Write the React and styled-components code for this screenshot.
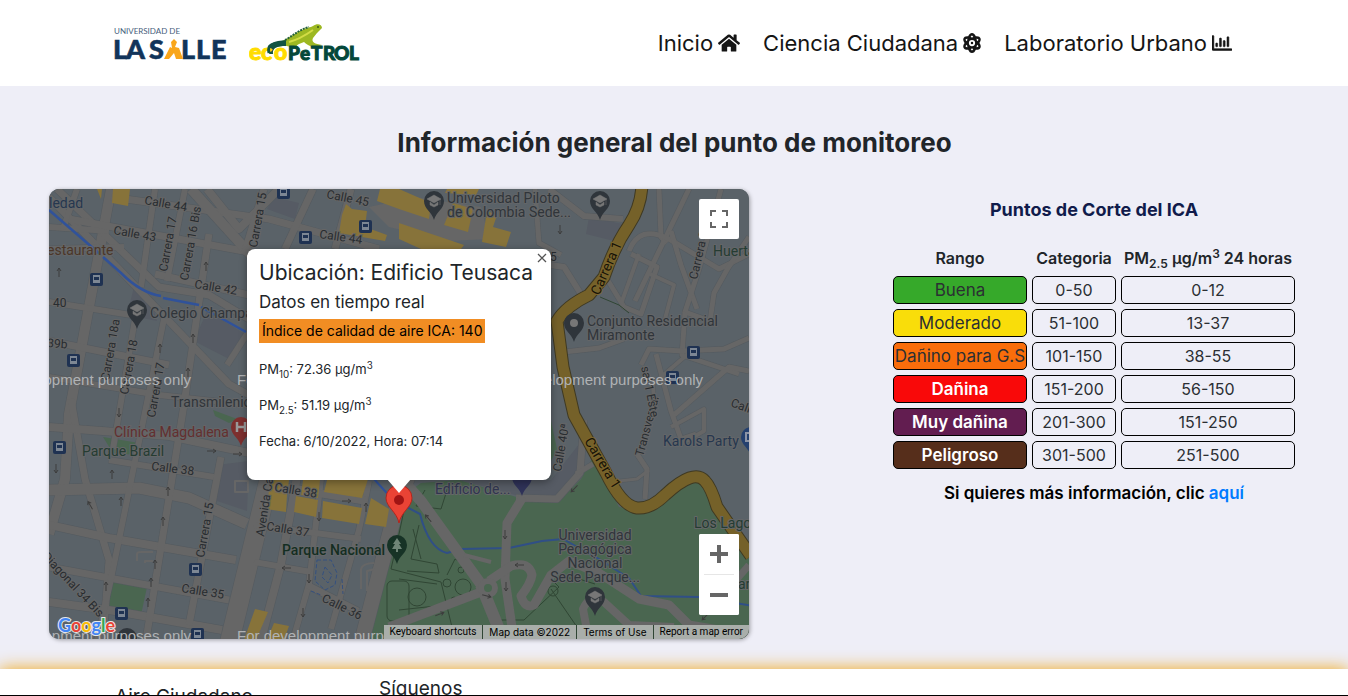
import React from "react";
import styled, { createGlobalStyle, css } from "styled-components";
import { FaHome, FaAtom, FaRegChartBar } from "react-icons/fa";

const Global = createGlobalStyle`
  * { box-sizing: border-box; }
  html, body { margin: 0; padding: 0; }
  body {
    font-family: Inter, "Open Sans", sans-serif;
    font-size: 16px;
    line-height: 24px;
    color: #212529;
    background: #eeeef7;
  }
  h1, h2, h3, p { margin: 0; }
  sub, sup { font-size: 75%; line-height: 0; }
`;

const Page = styled.div`
  height: 100vh;
  overflow-y: auto;
  scrollbar-width: none;
  border-bottom: 1px solid #000;
`;

const Header = styled.header`
  display: flex;
  align-items: center;
  justify-content: space-between;
  height: 86px;
  padding: 0 116px 0 114px;
  background: #fff;
`;

const Logos = styled.div`
  display: flex;
  align-items: center;
  gap: 22px;
  svg { display: block; }
`;

const Nav = styled.nav`
  display: flex;
  gap: 23px;
`;

const NavLink = styled.a`
  display: flex;
  align-items: center;
  gap: 5px;
  font-size: 22px;
  color: #151515;
  text-decoration: none;
  white-space: nowrap;
  svg { width: ${(p) => p.$icon}px; height: 20px; flex: none; }
`;

const Main = styled.main`
  padding: 41px 48px 30px 49px;
`;

const PageTitle = styled.h1`
  font-size: 26px;
  line-height: 32px;
  font-weight: 700;
  text-align: center;
  margin-bottom: 30px;
`;

const Columns = styled.div`
  display: flex;
  justify-content: space-between;
  align-items: flex-start;
  gap: 24px;
`;

const MapCard = styled.section`
  position: relative;
  flex: 0 1 700px;
  min-width: 0;
  height: 450px;
  border-radius: 10px;
  overflow: hidden;
  background: #5b6369;
  box-shadow: 1px 1px 4px rgba(0, 0, 0, 0.35);
`;

const MapArt = styled.svg`
  display: block;
  width: 100%;
  height: 100%;
  font-family: Roboto, sans-serif;
`;

const InfoWindow = styled.div`
  position: absolute;
  left: 198px;
  top: 60px;
  width: 304px;
  height: 231px;
  padding: 12px;
  border-radius: 8px;
  background: #fff;
  box-shadow: 0 2px 7px 1px rgba(0, 0, 0, 0.3);
  &::after {
    content: "";
    position: absolute;
    left: 140px;
    top: 230px;
    border: 12px solid transparent;
    border-top: 14px solid #fff;
    border-bottom: 0;
  }
`;

const CloseButton = styled.button`
  position: absolute;
  right: 3px;
  top: 3px;
  display: flex;
  padding: 0;
  border: 0;
  background: none;
  color: #555;
`;

const Place = styled.h2`
  font-size: 21px;
  line-height: 24px;
  font-weight: 400;
  white-space: nowrap;
`;

const Live = styled.h3`
  margin-top: 8px;
  font-size: 17px;
  line-height: 19px;
  font-weight: 400;
`;

const Badge = styled.p`
  display: inline-block;
  margin-top: 7px;
  padding: 0 3px;
  font-size: 14px;
  line-height: 24px;
  color: #000;
  background: #f18d23;
  white-space: nowrap;
`;

const Reading = styled.p`
  margin-top: 16px;
  font-size: 13px;
  line-height: 20px;
`;

const squareButton = css`
  display: flex;
  align-items: center;
  justify-content: center;
  width: 40px;
  height: 40px;
  padding: 0;
  border: 0;
  background: #fff;
  color: #666;
`;

const FullscreenButton = styled.button`
  ${squareButton}
  position: absolute;
  right: 10px;
  top: 10px;
  border-radius: 2px;
`;

const ZoomBox = styled.div`
  position: absolute;
  right: 10px;
  bottom: 24px;
  width: 40px;
  border-radius: 2px;
  background: #fff;
  overflow: hidden;
  hr { margin: 0 5px; border: 0; border-top: 1px solid #e6e6e6; }
`;

const ZoomButton = styled.button`${squareButton}`;

const Legal = styled.div`
  position: absolute;
  right: 0;
  bottom: 0;
  display: flex;
  gap: 1px;
  background: #2f4534;
`;

const legalPart = css`
  padding: 0 6px;
  border: 0;
  font: 10px/14px Inter, sans-serif;
  color: #000;
  background: #a9aeaa;
  text-decoration: none;
  white-space: nowrap;
`;
const LegalButton = styled.button`${legalPart} font-family: Roboto, sans-serif;`;
const LegalText = styled.span`${legalPart}`;
const LegalLink = styled.a`${legalPart} font-family: ${(p) => (p.$narrow ? "Roboto" : "Inter")}, sans-serif;`;

const Cuts = styled.section`
  flex: none;
  text-align: center;
`;

const CutsTitle = styled.h2`
  margin: 9px 0 18px;
  font-size: 18px;
  line-height: 24px;
  font-weight: 700;
  color: #101b4b;
`;

const CutsTable = styled.table`
  width: 412px;
  table-layout: fixed;
  border-collapse: separate;
  border-spacing: 5px;
  white-space: nowrap;
`;

const Col = styled.col`width: ${(p) => p.$w}px;`;

const HeadCell = styled.th`
  padding: 0;
  height: 26px;
  line-height: 24px;
  font-size: 16px;
  font-weight: 600;
`;

const Cell = styled.td`
  height: 28px;
  padding: 0;
  border: 1px solid #000;
  border-radius: 5px;
  font-size: ${(p) => (p.$bg ? 17 : 16)}px;
  line-height: 24px;
  background: ${(p) => p.$bg || "transparent"};
  color: ${(p) => (p.$light ? "#fff" : "#2b2f33")};
  font-weight: ${(p) => (p.$light ? 600 : 400)};
`;

const More = styled.p`
  margin-top: 7px;
  font-size: 17px;
  font-weight: 600;
  color: #000;
  a { color: #007bff; text-decoration: none; }
`;

const Footer = styled.footer`
  display: flex;
  align-items: flex-start;
  gap: 126px;
  padding: 7px 115px 0;
  height: 180px;
  background: #fff;
  box-shadow: 0 0 16px 0 #f0a81a;
`;

const FooterHeading = styled.h3`
  font-size: 19px;
  line-height: 26px;
  font-weight: 400;
  padding-top: ${(p) => p.$drop || 0}px;
`;

function LaSalleLogo() {
  return (
    <svg width="113" height="36" viewBox="0 0 113 36" role="img" aria-label="Universidad de La Salle">
      <text x="0" y="9" fontFamily="Lato, sans-serif" fontSize="8" fill="#46607c">UNIVERSIDAD DE</text>
      <g fontFamily="Lato, sans-serif" fontWeight="900" fontSize="27" fill="#12345a" stroke="#12345a" strokeWidth="0.6">
        <text y="34" x="-1 12 35 67 82 97">LASLLE</text>
      </g>
      <path d="M50 34 L56 22 L58 23 L57 17 L60 14 L63 17 L61 22 L65 23 L69 34 H62 L60 28 L55 34 Z" fill="#f9a61a" />
    </svg>
  );
}

function EcopetrolLogo() {
  return (
    <svg width="112" height="40" viewBox="0 0 112 40" role="img" aria-label="Ecopetrol">
      <path d="M21 31 C17 29 18 20 29 19 C36 18 43 12 49 9 C55 5 60 5 64 3 C68 0 73 1 73 5 L68 10 L64 15 C62 19 66 21 73 22 L66 25 C60 23 57 21 55 19 L50 21 C46 23 48 24 51 26 L44 26 C42 23 39 23 34 23 C26 23 23 26 24 31 Z" fill="#9db822" />
      <path d="M21 31 C17 29 18 20 29 18 L37 17 L37 23 C28 23 23 25 24 31 Z" fill="#135442" />
      <g fontFamily="Lato, sans-serif" fontWeight="900">
        <text x="0 12 25" y="37" fontSize="23" fill="#ffdc00" stroke="#ffdc00">eco</text>
        <text x="39 51 62 74 85 100" y="37" fontSize="19" fill="#04483a" stroke="#04483a">PeTROL</text>
      </g>
      <path d="M20 30 C18 22 22 20 37 20" stroke="#135442" strokeWidth="3" fill="none" />
      <path d="M36 17 C44 13 49 7 60 4" stroke="#24603a" strokeWidth="2" strokeDasharray="2 1" fill="none" />
      <path d="M40 19 C48 17 54 14 64 7" stroke="#d3dc45" strokeWidth="2" fill="none" />
      <circle cx="69" cy="4" r="1" fill="#385b1a" />
    </svg>
  );
}

const streets = [
  [10, "M62 0 L20 225 L16 290 L0 345"], [7, "M22 210 L36 290 L60 371 L54 451"],
  [7, "M0 8 L70 80 L180 195 L200 206"], [7, "M8 0 L110 98 L160 106 L200 130"],
  [6, "M0 60 L75 58"], [6, "M0 38 L60 42"], [6, "M28 0 L14 40"],
  [7, "M62 8 L220 30 L330 60"], [7, "M20 30 L200 63"], [7, "M106 85 L200 106"],
  [6, "M0 113 L82 126"], [7, "M0 152 L120 176"], [6, "M0 188 L110 206 L200 216"],
  [8, "M0 238 L120 247 L210 266"], [6, "M60 271 L165 288"], [11, "M0 301 L90 299 L140 309 L198 335"],
  [8, "M0 336 L60 349 L187 371"], [7, "M0 378 L180 411"], [8, "M0 413 L66 422 L173 441"],
  [6, "M106 0 L92 98"], [6, "M136 0 L118 92"], [7, "M160 45 L134 222 L97 451"],
  [6, "M116 125 L62 390 L48 451"], [6, "M86 130 L64 260"], [7, "M172 268 L140 436"],
  [10, "M142 0 L220 86"], [8, "M158 0 L190 40 L232 -2"], [7, "M215 0 L195 65"],
  [7, "M264 0 L236 60"], [7, "M302 0 L286 60"], [6, "M200 142 L178 176"],
  [19, "M222 282 L180 455"], [8, "M248 288 L232 375 L212 451"], [6, "M272 290 L260 395 L244 451"],
  [6, "M320 292 L310 341 L282 440"], [15, "M360 285 L347 320 L312 455"],
  [8, "M210 294 L318 312"], [6, "M205 336 L312 350"], [6, "M205 373 L262 383"], [7, "M258 396 L309 422"],
  [5, "M486 0 L490 54 L512 66"],
  [6, "M500 0 L535 27 L574 30"], [6, "M460 70 L515 78 L535 110 L485 145"],
  [5, "M610 0 L612 48 L618 54"], [5, "M640 0 L586 112"],
  [5, "M580 62 Q590 35 620 50 L670 80 L700 65"], [5, "M558 90 L575 118 L592 125 L608 78 L582 65"],
  [4, "M590 65 L572 115"], [4, "M601 85 L625 96 L616 130"], [5, "M622 42 L632 76 L648 120"],
  [5, "M672 0 L650 80 L636 123 L661 132 L665 104 L679 79 L700 48"],
  [5, "M636 123 L633 166 L690 185"], [5, "M700 149 L675 160 L633 162 L600 160 L592 176"],
  [5, "M700 182 L680 178 L625 226"], [4, "M640 164 L604 195 L605 215"],
  [5, "M607 165 L622 222 L632 250 L647 245"], [4, "M622 238 L655 220 L655 242 L632 255"],
  [5, "M588 265 L598 280 L596 310"], [3, "M570 292 L588 290 L600 281"],
  [5, "M515 163 L550 159 L575 150"], [7, "M535 231 L531 284 L508 310 L467 309"],
  [5, "M527 285 L544 275"],
];
const parkRoads = [
  [11, "M348 285 L372 312 L434 398"], [9, "M474 308 L458 334 L456 390 L465 452"],
  [12, "M432 396 L456 455"], [9, "M440 400 L340 438"],
  [9, "M440 392 L462 377 Q480 372 483 386 Q482 394 472 407 Q476 420 485 416 L502 386 L520 372 L550 384 L590 410 L620 416 L640 436 L700 446"],
  [8, "M540 452 L534 420 Q540 405 555 413 L580 436 L625 438"], [4, "M415 366 L442 373"],
  [7, "M688 390 L700 376"],
];
const footpaths = "M376 301 L367 317 L392 320 L399 298 M357 312 L350 345 L342 380 L392 393 L403 438 M370 336 L362 370 L388 375 L390 384 L358 382 M398 386 L406 370 L426 380 M364 340 L372 370 M350 390 L388 395 M405 415 L350 421 M440 411 L450 431 L475 431 L510 398 L500 388 M510 388 L530 390 L546 395 M502 400 L528 438";
const yellowBlocks = [
  "M64 0 H81 L79 17 L63 14 Z", "M48 0 L52 10 L53 0 Z",
  "M331 0 H350 L382 14 L380 30 L350 20 L328 12 Z",
  "M297 15 L303 20 L318 22 L316 38 L338 46 L336 52 L290 44 L293 26 Z",
  "M350 34 L415 56 L412 60 H372 L350 50 Z",
  "M404 14 L424 20 L419 43 L395 36 Z", "M438 22 L448 26 L444 38 L462 43 L457 58 L433 53 Z",
  "M398 0 H430 L427 6 L396 4 Z",
  "M222 291 L240 291 L238 306 L220 302 Z", "M254 291 L271 291 L269 309 L252 306 Z", "M278 291 L319 290 L313 309 L275 303 Z",
  "M220 302 L238 306 L237 323 L217 320 Z", "M247 307 L269 311 L267 328 L245 323 Z", "M274 312 L313 319 L310 335 L273 329 Z",
  "M322 309 L340 320 L337 338 L316 335 Z", "M206 420 L219 423 L207 451 L195 451 Z", "M225 434 L240 437 L235 451 L218 451 Z",
];
const carrera = "M593 -4 Q592 18 580 36 Q565 58 555 88 L540 106 Q517 117 508 132 L514 178 L525 226 L557 284 Q573 317 588 319 Q602 320 616 306 Q645 279 656 292 Q662 298 668 318 L702 367";
const stream = "M350 314 L371 325 Q380 360 398 364 L412 360 L460 359 L493 352 L514 350 L550 370 L575 386 L580 389 L592 407 L650 408 L704 417";

const street = "#282c30";
const labels = [
  [0, 19, "ledad", 14, "#26374f"], [-2, 66, "estaurante", 14, "#4b3628"], [101, 129, "Colegio Champa", 14, "#30353a"],
  [122, 218, "Transmilenio", 14, "#30353a"], [65, 248, "Clínica Magdalena", 14, "#632f2f"], [33, 267, "Parque Brazil", 14, "#253c32"],
  [398, 14, "Universidad Piloto", 14, "#30353a"], [398, 28, "de Colombia Sede...", 14, "#30353a"],
  [538, 137, "Conjunto Residencial", 14, "#30353a"], [538, 151, "Miramonte", 14, "#30353a"], [664, 67, "Huerta", 14, "#253c32"],
  [614, 257, "Karols Party", 14, "#26374f"], [645, 339, "Los Lagos", 14, "#253c32"], [386, 305, "Edificio de...", 14, "#30354f"],
  [233, 366, "Parque Nacional", 14, "#142e22", 500], [689, 400, "arte", 14, "#253c32"],
];
const streetLabels = [
  [95, 15, 10, "Calle 44"], [64, 45, 10, "Calle 43"], [145, 99, 9, "Calle 42"], [277, 9, 11, "Calle 45"], [270, 49, 8, "Calle 44"],
  [4, 118, 0, "40"], [-2, 158, 4, "39b"], [102, 281, 7, "Calle 38"], [225, 302, 9, "Calle 38"], [217, 341, 9, "Calle 37"],
  [132, 403, 9, "Calle 35"], [272, 412, 26, "Calle 36"], [118, 83, -80, "Carrera 17"], [139, 92, -80, "Carrera 16 Bis"],
  [208, 59, -80, "Carrera 15"], [60, 192, -80, "Carrera 18a"], [79, 206, -80, "Carrera 18"], [106, 229, -80, "Carrera 17"],
  [155, 369, -80, "Carrera 15"], [215, 348, -81, "Avenida Caracas"], [-7, 368, 47, "Diagonal 34 Bis"],
  [550, 107, -66, "Carrera 1", "#171307"], [535, 252, 59, "Carrera 1", "#171307"], [648, 91, -77, "Carrera 9"],
  [512, 283, -80, "Calle 40ª"], [594, 268, -75, "Transversal"], [592, 178, 79, "sal 1 Este"], [681, 217, 20, "Calle 39"],
  [501, 72, 0, "5"],
];
const stations = [[234, 3], [256, 48], [316, 37], [47, 90], [24, 171], [10, 258], [146, 380], [72, 424], [148, 445], [644, 163], [623, 188]];
const arrows = [[10, 83, 0], [157, 77, 0], [144, 149, 0], [111, 159, 0], [139, 183, 0], [70, 224, 180], [7, 280, 180], [63, 285, 0], [119, 302, 0], [72, 312, 0], [114, 332, 0], [41, 316, -30], [106, 375, 0], [102, 393, 0], [57, 397, 0], [99, 413, 0], [163, 262, 90], [189, 265, 90], [298, 312, 90], [317, 318, 0], [270, 328, 180], [237, 379, -90], [260, 390, 180], [254, 424, 180], [511, 41, 180], [379, 329, -40], [456, 346, 180], [457, 398, 180], [470, 376, -90], [438, 407, 105], [391, 425, 70], [525, 300, 225], [656, 428, 225]];

function Pin({ x, y, color, kind }) {
  return (
    <g transform={`translate(${x} ${y})`}>
      <path d="M0 19 C-2 11 -10 8 -10 0 A10 10 0 0 1 10 0 C10 8 2 11 0 19 Z" fill={color} />
      {kind === "school" && <path d="M-7 -2 L0 -6 L7 -2 L0 2 Z M-4 1 L0 4 L4 1 V4 L0 6 L-4 4 Z M6 -2 V4" fill="#777" stroke="#777" strokeWidth=".5" />}
      {kind === "dot" && <circle r="4" fill="#777" />}
      {kind === "tree" && <path d="M0 -7 L4 -1 H2 L5 4 H1 V7 H-1 V4 H-5 L-2 -1 H-4 Z" fill="#6f8577" />}
      {kind === "hospital" && <path d="M-4 -5 V5 M4 -5 V5 M-4 0 H4" stroke="#999" strokeWidth="2.5" />}
      {kind === "shop" && <rect x="-5" y="-4" width="8" height="8" fill="none" stroke="#8b93a5" strokeWidth="2" />}
    </g>
  );
}

function MonitoringMap() {
  return (
    <MapArt viewBox="0 0 700 450" preserveAspectRatio="xMidYMid slice" role="img" aria-label="Mapa del punto de monitoreo">
      <rect width="700" height="450" fill="#5a6268" />
      <g fill="#565b64">
        <path d="M86 94 L100 106 L108 132 L78 126 Z M158 122 L196 145 L180 170 L145 152 Z M540 28 L574 35 L565 52 L537 45 Z M168 276 L200 272 L198 322 L168 312 Z M410 291 H502 L534 250 V285 L508 312 L474 308 Z M225 8 L250 14 L246 30 L218 20 Z" />
      </g>
      <g fill="#4a6650">
        <path d="M342 332 L350 310 L372 294 L410 291 L474 310 L508 314 L532 290 L544 268 L570 318 L600 322 L645 286 L660 290 L700 366 V450 H316 Z" />
        <path d="M62 392 L98 398 L92 426 L58 420 Z M54 248 L90 254 L88 266 L64 264 Z M164 221 L188 230 L180 234 L166 227 Z M502 232 L508 260 L502 272 Z" />
      </g>
      <g fill="none" strokeLinejoin="round">
        {streets.map(([w, d]) => <path key={d} d={d} stroke="#545a5f" strokeWidth={w + 1} />)}
        {streets.map(([w, d]) => <path key={d} d={d} stroke="#666" strokeWidth={w} />)}
        <path d="M366 8 L432 18 L440 50 L398 52 L340 38 L320 18 Z" fill="#666" stroke="none" />
        {yellowBlocks.map((d) => <path key={d} d={d} fill="#87733a" />)}
        <path d={stream} stroke="#304f86" strokeWidth="2" />
        <path d={footpaths} stroke="#304634" />
        <g stroke="#304634">
          <circle cx="368" cy="408" r="9" /><circle cx="414" cy="398" r="8" /><circle cx="398" cy="394" r="4" />
          <circle cx="405" cy="411" r="3" /><circle cx="504" cy="402" r="5" /><circle cx="412" cy="381" r="3" />
          <rect x="338" y="392" width="22" height="40" rx="5" />
        </g>
        {parkRoads.map(([w, d]) => <path key={d} d={d} stroke="#666" strokeWidth={w} />)}
        <circle cx="439" cy="399" r="7" fill="#4a6650" stroke="#666" strokeWidth="6" />
        <path d={carrera} stroke="#3f3922" strokeWidth="13" />
        <path d={carrera} stroke="#756129" strokeWidth="11" />
        <path d="M551 108 L570 116 L580 124" stroke="#304634" />
        <path d="M0 21 L52 66 M54 68 L72 84 Q92 104 112 107 M114 109 L150 116 M152 118 L197 143" stroke="#30529a" strokeWidth="2.5" />
        <path d="M325 290 L345 312" stroke="#30529a" strokeWidth="2" />
        <path d="M268 371 H282 L288 384 L286 396 L276 401 L266 392 Z M276 378 L283 386 L279 394 L273 388 Z M262 402 L272 406 M293 390 L294 405" stroke="#34507f" strokeDasharray="4 2" />
        <path d="M88 372 V365 Q88 363 92 363 H104 M96 374 V372 H104 M186 292 H199 V303 H186 Z M312 400 V380 Q314 374 325 374 M318 402 V382 L326 380" stroke="#666" strokeWidth="2" />
      </g>
      {arrows.map(([x, y, r]) => (
        <path key={`${x}-${y}`} transform={`translate(${x} ${y}) rotate(${r})`} d="M0 5 V-4 M-2 -1 L0 -4 L2 -1" stroke="#3d3d3d" fill="none" />
      ))}
      {stations.map(([x, y]) => (
        <g key={`${x}-${y}`} transform={`translate(${x} ${y})`}>
          <rect x="-6" y="-6" width="13" height="13" rx="2" fill="#1f3252" />
          <path d="M-3 -4 H4 V4 H-3 Z" fill="#7d8794" />
          <path d="M-2 -2 H3 V1 H-2 Z" fill="#1f3252" />
        </g>
      ))}
      <Pin x={88} y={121} color="#2f353b" kind="school" />
      <Pin x={385} y={12} color="#2f353b" kind="school" />
      <Pin x={551} y={12} color="#2f353b" kind="school" />
      <Pin x={546} y={408} color="#2f353b" kind="school" />
      <Pin x={525} y={134} color="#2f353b" kind="dot" />
      <Pin x={473} y={288} color="#2f3258" />
      <Pin x={192} y={238} color="#7d2f2e" kind="hospital" />
      <Pin x={348} y={356} color="#173326" kind="tree" />
      <Pin x={702} y={248} color="#24406f" kind="shop" />
      <circle cx="78" cy="449" r="10" fill="#2f353b" />
      <g stroke="#646668" strokeWidth="2" paintOrder="stroke" strokeLinejoin="round">
        {labels.map(([x, y, t, s, c, w]) => (
          <text key={t} x={x} y={y} fontSize={s} fill={c} fontWeight={w || 400}>{t}</text>
        ))}
        <g fontSize="14" fill="#30353a" textAnchor="middle">
          <text x="546" y="351">Universidad</text>
          <text x="546" y="365">Pedagógica</text>
          <text x="546" y="379">Nacional</text>
          <text x="546" y="393">Sede Parque...</text>
        </g>
      </g>
      {streetLabels.map(([x, y, r, t, c]) => (
        <text key={`${x}-${y}`} transform={`translate(${x} ${y}) rotate(${r})`} fontSize={c ? 14 : 12} fill={c || street} stroke={c ? "#7b652c" : "#666"} strokeWidth="2" paintOrder="stroke">{t}</text>
      ))}
      <g fontFamily="Liberation Sans, sans-serif" fontSize="15" fill="#b0b2b4">
        {[-68, 188, 444].map((x) => [196, 452].map((y) => <text key={`${x}-${y}`} x={x} y={y}>For development purposes only</text>))}
      </g>
      <text x="9" y="443" fontFamily="Lato, sans-serif" fontSize="18" fontWeight="700" stroke="#e8e8e8" strokeWidth="2" paintOrder="stroke">
        <tspan fill="#4285f4">G</tspan><tspan fill="#ea4335">o</tspan><tspan fill="#fbbc05">o</tspan><tspan fill="#4285f4">g</tspan><tspan fill="#34a853">l</tspan><tspan fill="#ea4335">e</tspan>
      </text>
      <path d="M350 334 C348 323 337 318 337 309 A13 13 0 0 1 363 309 C363 318 352 323 350 334 Z" fill="#ea4335" stroke="#b3261d" strokeWidth="1" />
      <circle cx="350" cy="311" r="5" fill="#a01414" />
    </MapArt>
  );
}

const rows = [
  ["Buena", "0-50", "0-12", "#36a92a", false],
  ["Moderado", "51-100", "13-37", "#f9dd0a", false],
  ["Dañino para G.S", "101-150", "38-55", "#f96d0b", false],
  ["Dañina", "151-200", "56-150", "#f90909", true],
  ["Muy dañina", "201-300", "151-250", "#621d50", true],
  ["Peligroso", "301-500", "251-500", "#562e1b", true],
];

export default function App() {
  return (
    <>
      <Global />
      <Page>
        <Header>
          <Logos><LaSalleLogo /><EcopetrolLogo /></Logos>
          <Nav>
            <NavLink href="#inicio" $icon={22}>Inicio <FaHome /></NavLink>
            <NavLink href="#ciencia" $icon={18}>Ciencia Ciudadana <FaAtom /></NavLink>
            <NavLink href="#laboratorio" $icon={20}>Laboratorio Urbano <FaRegChartBar strokeWidth="14" /></NavLink>
          </Nav>
        </Header>
        <Main>
          <PageTitle>Información general del punto de monitoreo</PageTitle>
          <Columns>
            <MapCard>
              <MonitoringMap />
              <InfoWindow>
                <CloseButton aria-label="Cerrar">
                  <svg width="12" height="12" viewBox="0 0 12 12"><path d="M2 2 L10 10 M10 2 L2 10" stroke="currentColor" strokeWidth="1.3" /></svg>
                </CloseButton>
                <Place>Ubicación: Edificio Teusaca</Place>
                <Live>Datos en tiempo real</Live>
                <Badge>Índice de calidad de aire ICA: 140</Badge>
                <Reading>PM<sub>10</sub>: 72.36 µg/m<sup>3</sup></Reading>
                <Reading>PM<sub>2.5</sub>: 51.19 µg/m<sup>3</sup></Reading>
                <Reading>Fecha: 6/10/2022, Hora: 07:14</Reading>
              </InfoWindow>
              <FullscreenButton aria-label="Pantalla completa">
                <svg width="18" height="18" viewBox="0 0 18 18"><path d="M1 6 V1 H6 M12 1 H17 V6 M17 12 V17 H12 M6 17 H1 V12" fill="none" stroke="currentColor" strokeWidth="2" /></svg>
              </FullscreenButton>
              <ZoomBox>
                <ZoomButton aria-label="Acercar">
                  <svg width="18" height="18" viewBox="0 0 18 18"><path d="M0 9 H18 M9 0 V18" stroke="currentColor" strokeWidth="4" /></svg>
                </ZoomButton>
                <hr />
                <ZoomButton aria-label="Alejar">
                  <svg width="18" height="18" viewBox="0 0 18 18"><path d="M0 9 H18" stroke="currentColor" strokeWidth="4" /></svg>
                </ZoomButton>
              </ZoomBox>
              <Legal>
                <LegalButton>Keyboard shortcuts</LegalButton>
                <LegalText>Map data ©2022</LegalText>
                <LegalLink href="#terms">Terms of Use</LegalLink>
                <LegalLink href="#report" $narrow>Report a map error</LegalLink>
              </Legal>
            </MapCard>
            <Cuts>
              <CutsTitle>Puntos de Corte del ICA</CutsTitle>
              <CutsTable>
                <colgroup><Col $w={134} /><Col $w={84} /><Col $w={174} /></colgroup>
                <thead>
                  <tr>
                    <HeadCell>Rango</HeadCell>
                    <HeadCell>Categoria</HeadCell>
                    <HeadCell>PM<sub>2.5</sub> µg/m<sup>3</sup> 24 horas</HeadCell>
                  </tr>
                </thead>
                <tbody>
                  {rows.map(([name, range, pm, bg, light]) => (
                    <tr key={name}>
                      <Cell $bg={bg} $light={light}>{name}</Cell>
                      <Cell>{range}</Cell>
                      <Cell>{pm}</Cell>
                    </tr>
                  ))}
                </tbody>
              </CutsTable>
              <More>Si quieres más información, clic <a href="#ica">aquí</a></More>
            </Cuts>
          </Columns>
        </Main>
        <Footer>
          <FooterHeading $drop={8}>Aire Ciudadano</FooterHeading>
          <FooterHeading>Síguenos</FooterHeading>
        </Footer>
      </Page>
    </>
  );
}
